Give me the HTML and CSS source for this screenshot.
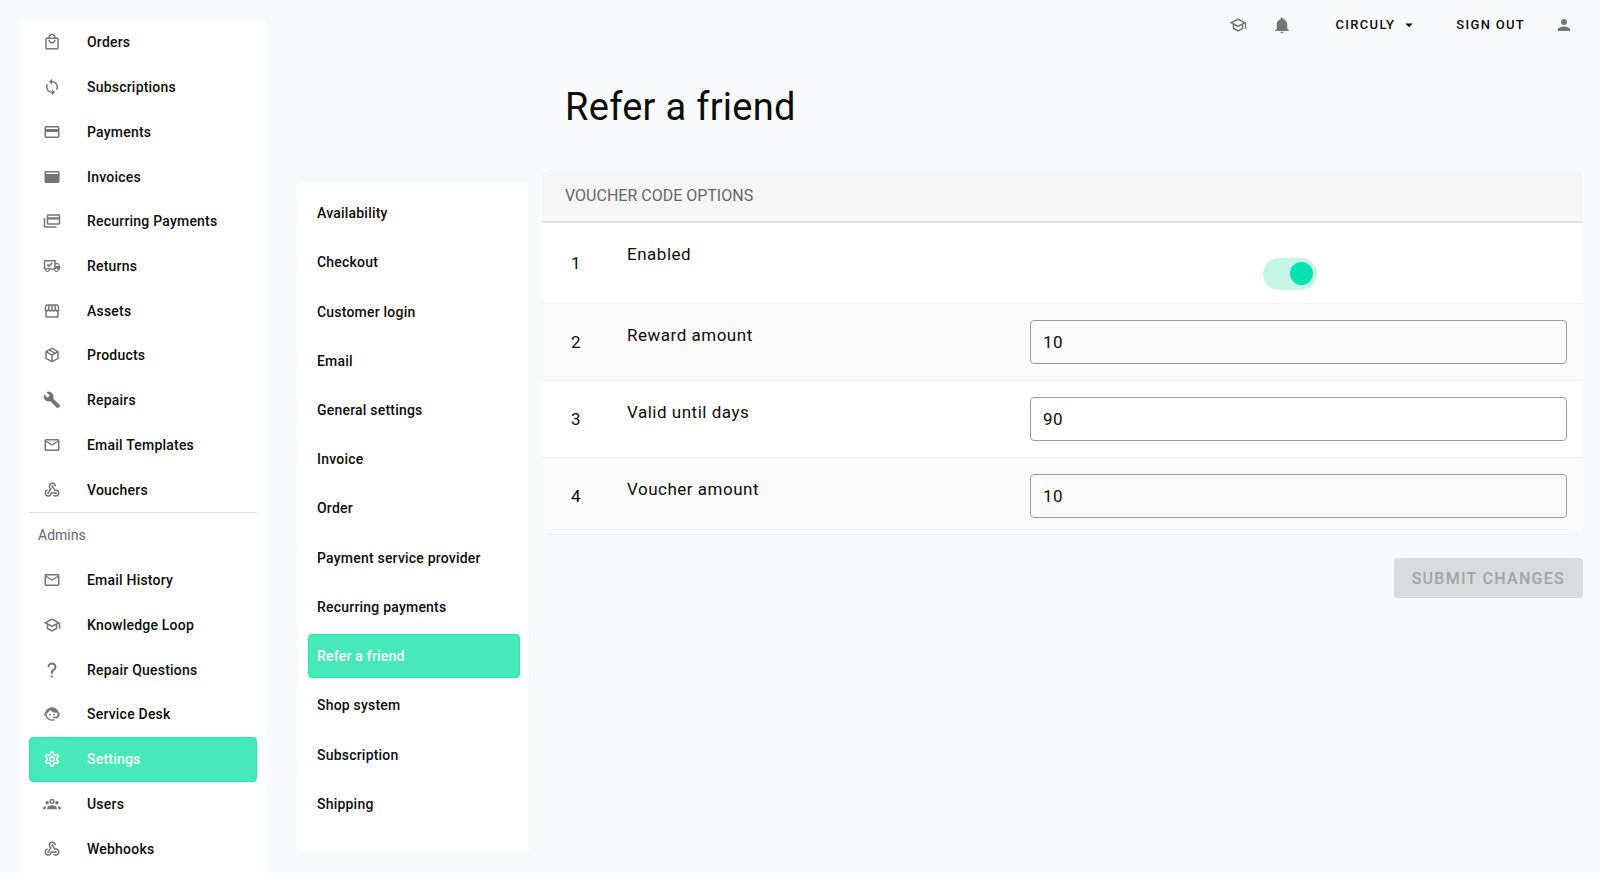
FILE: index.html
```html
<!DOCTYPE html>
<html lang="en">
<head>
<meta charset="utf-8">
<title>Refer a friend</title>
<link rel="stylesheet" href="styles.css">
</head>
<body>
<svg class="sprite" aria-hidden="true">
  <symbol id="bag" viewBox="0 0 24 24"><path d="M19 6H17C17 3.2 14.8 1 12 1S7 3.2 7 6H5C3.9 6 3 6.9 3 8V20C3 21.1 3.9 22 5 22H19C20.1 22 21 21.1 21 20V8C21 6.9 20.1 6 19 6M12 3C13.7 3 15 4.3 15 6H9C9 4.3 10.3 3 12 3M19 20H5V8H19V20M12 12C10.3 12 9 10.7 9 9H7C7 11.8 9.2 14 12 14S17 11.8 17 9H15C15 10.7 13.7 12 12 12Z"/></symbol>
  <symbol id="sync" viewBox="0 0 24 24"><path d="M12,18A6,6 0 0,1 6,12C6,11 6.25,10.03 6.7,9.2L5.24,7.74C4.46,8.97 4,10.43 4,12A8,8 0 0,0 12,20V23L16,19L12,15M12,4V1L8,5L12,9V6A6,6 0 0,1 18,12C18,13 17.75,13.97 17.3,14.8L18.76,16.26C19.54,15.03 20,13.57 20,12A8,8 0 0,0 12,4Z"/></symbol>
  <symbol id="card" viewBox="0 0 24 24"><path d="M20,8H4V6H20M20,18H4V12H20M20,4H4C2.89,4 2,4.89 2,6V18C2,19.11 2.89,20 4,20H20C21.11,20 22,19.11 22,18V6C22,4.89 21.11,4 20,4Z"/></symbol>
  <symbol id="card-solid" viewBox="0 0 24 24"><path d="M20,8H4V6H20M20,4H4C2.89,4 2,4.89 2,6V18C2,19.11 2.89,20 4,20H20C21.11,20 22,19.11 22,18V6C22,4.89 21.11,4 20,4Z"/></symbol>
  <symbol id="cards" viewBox="0 0 24 24"><path d="M21 3H7C5.9 3 5 3.9 5 5V15C5 16.1 5.9 17 7 17H21C22.1 17 23 16.1 23 15V5C23 3.9 22.1 3 21 3M21 15H7V10H21V15M21 7H7V5H21V7M3 19H18V21H3C1.9 21 1 20.1 1 19V8H3V19Z"/></symbol>
  <symbol id="truck" viewBox="0 0 24 24"><path d="M18 18.5C18.83 18.5 19.5 17.83 19.5 17S18.83 15.5 18 15.5 16.5 16.17 16.5 17 17.17 18.5 18 18.5M19.5 9.5H17V12H21.46L19.5 9.5M6 18.5C6.83 18.5 7.5 17.83 7.5 17S6.83 15.5 6 15.5 4.5 16.17 4.5 17 5.17 18.5 6 18.5M20 8L23 12V17H21C21 18.66 19.66 20 18 20S15 18.66 15 17H9C9 18.66 7.66 20 6 20S3 18.66 3 17H1V6C1 4.89 1.89 4 3 4H17V8H20M3 6V15H3.76C4.31 14.39 5.11 14 6 14S7.69 14.39 8.24 15H15V6H3M5 10.5L6.5 9L8 10.5L11.5 7L13 8.5L8 13.5L5 10.5Z"/></symbol>
  <symbol id="store" viewBox="0 0 24 24"><path d="M21.9 8.89L20.85 4.52C20.63 3.62 19.85 3 18.94 3H5.05C4.15 3 3.36 3.63 3.15 4.52L2.1 8.89C1.86 9.91 2.08 10.95 2.72 11.77C2.8 11.88 2.91 11.96 3 12.06V19C3 20.1 3.9 21 5 21H19C20.1 21 21 20.1 21 19V12.06C21.09 11.97 21.2 11.88 21.28 11.78C21.92 10.96 22.15 9.91 21.9 8.89M13 5H14.96L15.54 9.05C15.59 9.44 15.47 9.84 15.21 10.14C14.99 10.41 14.66 10.55 14.22 10.55C13.55 10.55 13 9.95 13 9.22V5M8.44 9.05L9.04 5H11V9.22C11 9.95 10.45 10.55 9.71 10.55C9.37 10.55 9.04 10.41 8.79 10.15C8.54 9.84 8.4 9.44 8.44 9.05M4.05 9.37L5.05 5H7.02L6.44 9.36C6.35 10.04 5.84 10.55 5.22 10.55C4.73 10.55 4.41 10.26 4.28 10.1C4 9.88 3.95 9.62 4.05 9.37M5 19V12.97C5.08 12.97 5.15 13 5.23 13C6.1 13 6.89 12.6 7.47 12C8.07 12.6 8.87 13 9.77 13C10.64 13 11.41 12.63 12 12.05C12.59 12.63 13.38 13 14.28 13C15.12 13 15.92 12.6 16.52 12C17.1 12.6 17.89 13 18.76 13C18.84 13 18.91 12.98 19 12.97V19H5M19.71 10.09C19.58 10.26 19.26 10.55 18.76 10.55C18.14 10.55 17.63 10.04 17.55 9.37L16.97 5H18.93L19.94 9.36C20 9.62 19.93 9.87 19.71 10.09Z"/></symbol>
  <symbol id="box" viewBox="0 0 24 24"><path d="M21,16.5C21,16.88 20.79,17.21 20.47,17.38L12.57,21.82C12.41,21.94 12.21,22 12,22C11.79,22 11.59,21.94 11.43,21.82L3.53,17.38C3.21,17.21 3,16.88 3,16.5V7.5C3,7.12 3.21,6.79 3.53,6.62L11.43,2.18C11.59,2.06 11.79,2 12,2C12.21,2 12.41,2.06 12.57,2.18L20.47,6.62C20.79,6.79 21,7.12 21,7.5V16.5M12,4.15L10.11,5.22L16,8.61L17.96,7.5L12,4.15M6.04,7.5L12,10.85L13.96,9.75L8.08,6.35L6.04,7.5M5,15.91L11,19.29V12.58L5,9.21V15.91M19,15.91V9.21L13,12.58V19.29L19,15.91Z"/></symbol>
  <symbol id="wrench" viewBox="0 0 24 24"><path d="M22.7,19L13.6,9.9C14.5,7.6 14,4.9 12.1,3C10.1,1 7.1,0.6 4.7,1.7L9,6L6,9L1.6,4.7C0.4,7.1 0.9,10.1 2.9,12.1C4.8,14 7.5,14.5 9.8,13.6L18.9,22.7C19.3,23.1 19.9,23.1 20.3,22.7L22.6,20.4C23.1,20 23.1,19.3 22.7,19Z"/></symbol>
  <symbol id="mail" viewBox="0 0 24 24"><path d="M22 6C22 4.9 21.1 4 20 4H4C2.9 4 2 4.9 2 6V18C2 19.1 2.9 20 4 20H20C21.1 20 22 19.1 22 18V6M20 6L12 11L4 6H20M20 18H4V8L12 13L20 8V18Z"/></symbol>
  <symbol id="hook" viewBox="0 0 24 24"><path d="M10 15h5.88c.27-.31.67-.5 1.12-.5.83 0 1.5.67 1.5 1.5s-.67 1.500-1.5 1.500c-.44 0-.84-.19-1.12-.5H11.900c-.46 2.280-2.480 4-4.900 4-2.760 0-5-2.240-5-5 0-2.420 1.720-4.440 4-4.900v2.070C4.840 13.580 4 14.700 4 16c0 1.650 1.350 3 3 3s3-1.350 3-3v-1zM12.500 4c1.650 0 3 1.350 3 3h2c0-2.760-2.240-5-5-5s-5 2.240-5 5c0 1.430.6 2.710 1.550 3.620l-2.350 3.900C6.020 14.660 5.500 15.270 5.500 16c0 .83.67 1.500 1.500 1.500s1.500-.67 1.500-1.500c0-.16-.02-.31-.07-.45l3.380-5.630C10.490 9.610 9.500 8.420 9.500 7c0-1.650 1.350-3 3-3zM17 13c-.64 0-1.230.2-1.720.54l-3.050-5.070C11.530 8.350 11 7.740 11 7c0-.83.67-1.500 1.500-1.500S14 6.170 14 7c0 .15-.02.29-.06.43l2.190 3.650c.28-.05.57-.08.87-.08 2.760 0 5 2.240 5 5s-2.240 5-5 5c-1.850 0-3.470-1.010-4.330-2.500h2.670c.48.32 1.050.5 1.660.5 1.650 0 3-1.350 3-3s-1.350-3-3-3z"/></symbol>
  <symbol id="school" viewBox="0 0 24 24"><path d="M12 3L1 9L5 11.18V17.18L12 21L19 17.18V11.18L21 10.09V17H23V9L12 3M18.82 9L12 12.72L5.18 9L12 5.28L18.82 9M17 16L12 18.72L7 16V12.27L12 15L17 12.27V16Z"/></symbol>
  <symbol id="help" viewBox="0 0 24 24"><path d="M10.2,19.2H13V22H10.2V19.2M12,2C17.35,2.22 19.68,7.62 16.5,11.67C15.67,12.67 14.33,13.33 13.67,14.17C13,15 13,16 13,17H10.4C10.4,15.33 10.4,13.92 11,12.92C11.6,11.92 13,11.2 13.9,10.4C16.1,8.2 15.4,4.7 12,4.5A3.4,3.4 0 0,0 8.6,8H6A6,6 0 0,1 12,2Z"/></symbol>
  <symbol id="agent" viewBox="0 0 24 24"><path d="M18.72,14.76C19.07,13.91 19.26,13 19.26,12C19.26,11.28 19.15,10.59 18.96,9.95C18.31,10.1 17.63,10.18 16.92,10.18C13.86,10.18 11.15,8.67 9.5,6.34C8.61,8.5 6.91,10.26 4.77,11.22C4.73,11.47 4.73,11.74 4.73,12A7.27,7.27 0 0,0 12,19.27C13.05,19.27 14.06,19.04 14.97,18.63C15.54,19.72 15.8,20.26 15.78,20.26C14.14,20.81 12.87,21.08 12,21.08C9.58,21.08 7.27,20.13 5.57,18.42C4.53,17.38 3.76,16.11 3.33,14.73H2V10.18H3.09C3.93,6.04 7.6,2.92 12,2.92C14.4,2.92 16.71,3.87 18.42,5.58C19.69,6.84 20.54,8.45 20.89,10.18H22V14.73H21.94L18.38,18L13.08,17.4V15.73H17.91L18.72,14.76M9.27,11.77A1.14,1.14 0 1,1 9.26,11.77M14.72,11.77A1.14,1.14 0 1,1 14.71,11.77Z"/></symbol>
  <symbol id="cog" viewBox="0 0 24 24"><path d="M12,8A4,4 0 0,1 16,12A4,4 0 0,1 12,16A4,4 0 0,1 8,12A4,4 0 0,1 12,8M12,10A2,2 0 0,0 10,12A2,2 0 0,0 12,14A2,2 0 0,0 14,12A2,2 0 0,0 12,10M10,22C9.75,22 9.54,21.82 9.5,21.58L9.13,18.93C8.5,18.68 7.96,18.34 7.44,17.94L4.95,18.95C4.73,19.03 4.46,18.95 4.34,18.73L2.34,15.27C2.21,15.05 2.27,14.78 2.46,14.63L4.57,12.97L4.5,12L4.57,11L2.46,9.37C2.27,9.22 2.21,8.95 2.34,8.73L4.34,5.27C4.46,5.05 4.73,4.96 4.95,5.05L7.44,6.05C7.96,5.66 8.5,5.32 9.13,5.07L9.5,2.42C9.54,2.18 9.75,2 10,2H14C14.25,2 14.46,2.18 14.5,2.42L14.87,5.07C15.5,5.32 16.04,5.66 16.56,6.05L19.05,5.05C19.27,4.96 19.54,5.05 19.66,5.27L21.66,8.73C21.79,8.95 21.73,9.22 21.54,9.37L19.43,11L19.5,12L19.43,13L21.54,14.63C21.73,14.78 21.79,15.05 21.66,15.27L19.66,18.73C19.54,18.95 19.27,19.04 19.05,18.95L16.56,17.95C16.04,18.34 15.5,18.68 14.87,18.93L14.5,21.58C14.46,21.82 14.25,22 14,22H10M11.25,4L10.88,6.61C9.68,6.86 8.62,7.5 7.85,8.39L5.44,7.35L4.69,8.65L6.8,10.2C6.4,11.37 6.4,12.64 6.8,13.8L4.68,15.36L5.43,16.66L7.86,15.62C8.63,16.5 9.68,17.14 10.87,17.38L11.24,20H12.76L13.13,17.39C14.32,17.14 15.37,16.5 16.14,15.62L18.57,16.66L19.32,15.36L17.2,13.81C17.6,12.64 17.6,11.37 17.2,10.2L19.31,8.65L18.56,7.35L16.15,8.39C15.38,7.5 14.32,6.86 13.12,6.62L12.75,4H11.25Z"/></symbol>
  <symbol id="group" viewBox="0 0 24 24"><path d="M12 5A3.5 3.5 0 1 0 12.01 5M12 7A1.5 1.5 0 1 1 11.99 7M5.500 8A2.300 2.300 0 1 0 5.510 8M18.500 8A2.300 2.300 0 1 0 18.510 8M5.500 19V17.500C5.500 15.300 8.400 13.500 12 13.500S18.500 15.300 18.500 17.500V19H5.500M0 19V17.500C0 16 1.900 14.800 4.500 14.500C3.900 15.200 3.500 16.200 3.500 17.300V19H0M24 19H20.500V17.300C20.500 16.200 20.100 15.200 19.500 14.500C22.100 14.800 24 16 24 17.500V19Z"/></symbol>
  <symbol id="bell" viewBox="0 0 24 24"><path d="M21,19V20H3V19L5,17V11C5,7.9 7.03,5.17 10,4.29C10,4.19 10,4.1 10,4A2,2 0 0,1 12,2A2,2 0 0,1 14,4C14,4.1 14,4.19 14,4.29C16.97,5.17 19,7.9 19,11V17L21,19M14,21A2,2 0 0,1 12,23A2,2 0 0,1 10,21"/></symbol>
  <symbol id="caret" viewBox="0 0 24 24"><path d="M7,10L12,15L17,10H7Z"/></symbol>
  <symbol id="person" viewBox="0 0 24 24"><path d="M12,4A4,4 0 0,1 16,8A4,4 0 0,1 12,12A4,4 0 0,1 8,8A4,4 0 0,1 12,4M12,14C16.42,14 20,15.79 20,18V20H4V18C4,15.79 7.58,14 12,14Z"/></symbol>
</svg>

<div class="app">
  <nav class="sidebar" aria-label="Main">
    <div class="nav-list">
      <a class="nav-item" href="#"><svg class="icon"><use href="#bag"/></svg>Orders</a>
      <a class="nav-item" href="#"><svg class="icon"><use href="#sync"/></svg>Subscriptions</a>
      <a class="nav-item" href="#"><svg class="icon"><use href="#card"/></svg>Payments</a>
      <a class="nav-item" href="#"><svg class="icon"><use href="#card-solid"/></svg>Invoices</a>
      <a class="nav-item" href="#"><svg class="icon"><use href="#cards"/></svg>Recurring Payments</a>
      <a class="nav-item" href="#"><svg class="icon"><use href="#truck"/></svg>Returns</a>
      <a class="nav-item" href="#"><svg class="icon"><use href="#store"/></svg>Assets</a>
      <a class="nav-item" href="#"><svg class="icon"><use href="#box"/></svg>Products</a>
      <a class="nav-item" href="#"><svg class="icon"><use href="#wrench"/></svg>Repairs</a>
      <a class="nav-item" href="#"><svg class="icon"><use href="#mail"/></svg>Email Templates</a>
      <a class="nav-item" href="#"><svg class="icon"><use href="#hook"/></svg>Vouchers</a>
    </div>
    <div class="nav-heading">Admins</div>
    <div class="nav-list nav-list-admin">
      <a class="nav-item" href="#"><svg class="icon"><use href="#mail"/></svg>Email History</a>
      <a class="nav-item" href="#"><svg class="icon"><use href="#school"/></svg>Knowledge Loop</a>
      <a class="nav-item" href="#"><svg class="icon"><use href="#help"/></svg>Repair Questions</a>
      <a class="nav-item" href="#"><svg class="icon"><use href="#agent"/></svg>Service Desk</a>
      <a class="nav-item active" href="#" aria-current="page"><svg class="icon"><use href="#cog"/></svg>Settings</a>
      <a class="nav-item" href="#"><svg class="icon"><use href="#group"/></svg>Users</a>
      <a class="nav-item" href="#"><svg class="icon"><use href="#hook"/></svg>Webhooks</a>
    </div>
  </nav>

  <div class="page">
    <header class="topbar">
      <button class="icon-button" type="button" aria-label="Knowledge"><svg class="icon"><use href="#school"/></svg></button>
      <button class="icon-button" type="button" aria-label="Notifications"><svg class="icon"><use href="#bell"/></svg></button>
      <button class="text-button account" type="button">CIRCULY<svg class="icon"><use href="#caret"/></svg></button>
      <button class="text-button" type="button">SIGN OUT</button>
      <button class="icon-button" type="button" aria-label="Profile"><svg class="icon"><use href="#person"/></svg></button>
    </header>

    <div class="content">
      <nav class="subnav" aria-label="Settings">
        <a class="subnav-item" href="#">Availability</a>
        <a class="subnav-item" href="#">Checkout</a>
        <a class="subnav-item" href="#">Customer login</a>
        <a class="subnav-item" href="#">Email</a>
        <a class="subnav-item" href="#">General settings</a>
        <a class="subnav-item" href="#">Invoice</a>
        <a class="subnav-item" href="#">Order</a>
        <a class="subnav-item" href="#">Payment service provider</a>
        <a class="subnav-item" href="#">Recurring payments</a>
        <a class="subnav-item active" href="#" aria-current="page">Refer a friend</a>
        <a class="subnav-item" href="#">Shop system</a>
        <a class="subnav-item" href="#">Subscription</a>
        <a class="subnav-item" href="#">Shipping</a>
      </nav>

      <main class="main">
        <h1 class="title">Refer a friend</h1>
        <form>
          <section class="panel">
            <h2 class="panel-heading">VOUCHER CODE OPTIONS</h2>
            <div class="row row-toggle">
              <span class="number">1</span>
              <label class="label" for="enabled">Enabled</label>
              <div class="toggle-cell"><input class="toggle" type="checkbox" role="switch" id="enabled" checked></div>
            </div>
            <div class="row">
              <span class="number">2</span>
              <label class="label" for="reward">Reward amount</label>
              <input class="field" type="text" id="reward" value="10">
            </div>
            <div class="row">
              <span class="number">3</span>
              <label class="label" for="days">Valid until days</label>
              <input class="field" type="text" id="days" value="90">
            </div>
            <div class="row">
              <span class="number">4</span>
              <label class="label" for="voucher">Voucher amount</label>
              <input class="field" type="text" id="voucher" value="10">
            </div>
          </section>
          <div class="actions"><button class="submit" type="submit" disabled>SUBMIT CHANGES</button></div>
        </form>
      </main>
    </div>
  </div>
</div>
</body>
</html>
```

FILE: styles.css
```css
* {
  box-sizing: border-box;
}

body {
  margin: 0;
  background: #f9fafc;
  color: #0d0d0d;
  font-family: Roboto, "Liberation Sans", sans-serif;
}

a {
  color: inherit;
  text-decoration: none;
}

button {
  border: 0;
  background: none;
  color: inherit;
  font-family: inherit;
}

.sprite {
  display: none;
}

.icon {
  flex: none;
  width: 18px;
  height: 18px;
  color: #757575;
  fill: currentColor;
}

.app {
  display: flex;
  min-height: 100vh;
  padding-left: 20px;
}

.sidebar {
  flex: none;
  width: 246px;
  margin-top: 20px;
  padding: 0 9px;
  border-radius: 4px 4px 0 0;
  background: #fff;
}

.nav-list {
  display: grid;
  grid-auto-rows: 1fr;
  min-height: 492px;
}

.nav-list-admin {
  min-height: 313px;
}

.nav-item {
  display: flex;
  align-items: center;
  gap: 26px;
  padding: 0 13px;
  border: 1px solid transparent;
  border-radius: 4px;
  font-size: 14px;
  font-weight: 500;
  letter-spacing: 0.015em;
}

.nav-heading {
  padding: 0 9px;
  border-top: 1px solid #dedede;
  color: #666;
  font-size: 14px;
  line-height: 45px;
}

.active {
  border: 1px solid #1de9b6;
  background: #48e9b9;
  color: #fff;
}

.active .icon {
  color: #fff;
}

.page {
  display: flex;
  flex: 1;
  flex-direction: column;
  min-width: 0;
  padding: 0 17px 0 33px;
}

.topbar {
  display: flex;
  align-items: center;
  justify-content: flex-end;
  height: 49px;
}

.icon-button {
  display: flex;
  justify-content: center;
  width: 44px;
  padding: 0;
}

.topbar > .icon-button:last-child {
  width: 38px;
}

.text-button {
  display: flex;
  align-items: center;
  padding: 0 20px;
  font-size: 13px;
  font-weight: 500;
  letter-spacing: 0.1em;
}

.account {
  gap: 5px;
  padding: 0 18px 0 32px;
}

.account .icon {
  color: inherit;
}

.content {
  display: flex;
  align-items: flex-start;
  gap: 13px;
}

.subnav {
  display: grid;
  flex: none;
  grid-auto-rows: 1fr;
  row-gap: 5px;
  width: 230px;
  min-height: 670px;
  margin: 133px 0 21px;
  padding: 9px 9px 26px;
  border-radius: 4px;
  background: #fff;
}

.subnav-item {
  display: flex;
  align-items: center;
  padding: 0 8px;
  border: 1px solid transparent;
  border-radius: 4px;
  font-size: 14px;
  font-weight: 500;
  letter-spacing: 0.015em;
}

.subnav-item.active {
  border-color: #1de9b6;
}

.main {
  flex: 1;
  min-width: 0;
}

.title {
  margin: 34px 0 39px;
  padding-left: 23px;
  font-size: 38px;
  font-weight: 400;
  letter-spacing: 0.0075em;
  line-height: 48px;
}

.panel {
  overflow: hidden;
  border-radius: 8px;
  background: #fff;
}

.panel-heading {
  margin: 0;
  padding: 0 23px;
  border-bottom: 2px solid #e2e2e2;
  background: #f6f6f6;
  color: #666;
  font-size: 16px;
  font-weight: 400;
  line-height: 51px;
}

.row {
  display: grid;
  grid-template-columns: 69px 403fr 537fr;
  align-items: center;
  min-height: 77px;
  padding: 0 16px;
  border-bottom: 1px solid #f1f1f1;
  font-size: 17px;
  letter-spacing: 0.03em;
  line-height: 24px;
}

.row:nth-child(odd) {
  background: #fbfbfb;
}

.row-toggle {
  min-height: 81px;
}

.number {
  padding-left: 13px;
}

.label {
  align-self: start;
  padding-top: 19px;
}

.field {
  width: 100%;
  height: 44px;
  padding: 0 12px;
  border: 1px solid #9c9c9c;
  border-radius: 4px;
  background: transparent;
  color: inherit;
  font-family: inherit;
  font-size: 17px;
  letter-spacing: inherit;
}

.toggle-cell {
  display: flex;
  justify-content: center;
  padding: 21px 18px 0 0;
}

.toggle {
  appearance: none;
  display: flex;
  justify-content: flex-end;
  align-items: center;
  width: 54px;
  height: 32px;
  margin: 0;
  padding: 0 4px;
  border-radius: 16px;
  background: #c6f6e5;
}

.toggle::before {
  content: "";
  width: 23px;
  height: 23px;
  border-radius: 50%;
  background: #00e5b0;
}

.toggle:not(:checked) {
  justify-content: flex-start;
  background: #ddd;
}

.actions {
  display: flex;
  justify-content: flex-end;
  margin-top: 23px;
}

.submit {
  height: 40px;
  padding: 0 18px;
  border-radius: 4px;
  background: #dadbdd;
  color: #a3a4a5;
  font-size: 16px;
  font-weight: 500;
  letter-spacing: 0.08em;
}
```
